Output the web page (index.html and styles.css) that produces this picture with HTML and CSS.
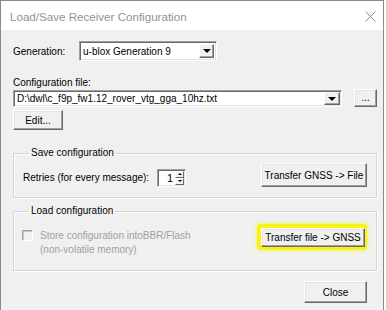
FILE: index.html
```html
<!DOCTYPE html>
<html lang="en">

<head>
    <meta charset="UTF-8">
    <title>Load/Save Receiver Configuration</title>
    <link rel="stylesheet" href="styles.css">
</head>

<body>
    <div class="window">
        <div class="titlebar">
            <span class="title">Load/Save Receiver Configuration</span>
            <svg class="close-x" width="11" height="11" viewBox="0 0 11 11">
                <path d="M0.5 0.5 L10.5 10.5 M10.5 0.5 L0.5 10.5" stroke="#8c8c8c" stroke-width="1" fill="none"/>
            </svg>
        </div>

        <div class="content">
            <div class="gen-row">
                <label class="gen-label">Generation:</label>
                <div class="combo gen-combo">
                    <span class="combo-text">u-blox Generation 9</span>
                    <span class="combo-btn"><span class="arrow-down"></span></span>
                </div>
            </div>

            <div class="file-label">Configuration file:</div>
            <div class="file-row">
                <div class="combo file-combo">
                    <span class="combo-text">D:\dwl\c_f9p_fw1.12_rover_vtg_gga_10hz.txt</span>
                    <span class="combo-btn"><span class="arrow-down"></span></span>
                </div>
                <button class="btn btn-dots">...</button>
            </div>
            <button class="btn btn-edit">Edit...</button>

            <fieldset class="group group-save">
                <legend>Save configuration</legend>
                <div class="group-row">
                    <div class="retries">
                        <span class="retries-label">Retries (for every message):</span>
                        <div class="spinner">
                            <span class="spin-value">1</span>
                            <span class="spin-btns">
                                <span class="spin-btn"><span class="arrow-up"></span></span>
                                <span class="spin-btn"><span class="arrow-small-down"></span></span>
                            </span>
                        </div>
                    </div>
                    <button class="btn btn-transfer">Transfer GNSS -&gt; File</button>
                </div>
            </fieldset>

            <fieldset class="group group-load">
                <legend>Load configuration</legend>
                <div class="group-row load-row">
                    <div class="store">
                        <span class="checkbox"></span>
                        <span class="store-text">Store configuration intoBBR/Flash<br>(non-volatile memory)</span>
                    </div>
                    <div class="highlight">
                        <button class="btn btn-load">Transfer file -&gt; GNSS</button>
                    </div>
                </div>
            </fieldset>

            <div class="footer">
                <button class="btn btn-close">Close</button>
            </div>
        </div>
    </div>
</body>

</html>
```

FILE: styles.css
```css
body {
    margin: 0;
    background-color: #ffffff;
    font-family: "Liberation Sans", Arial, sans-serif;
    font-size: 10px;
    color: #000;
}

.window {
    width: 382px;
    border: 1px solid #8a8a8a;
    background-color: #f0f0f0;
}

.titlebar {
    height: 29px;
    display: flex;
    align-items: center;
    justify-content: space-between;
    padding: 0 7px 0 9px;
    background-color: #ffffff;
}

.title {
    font-size: 11.6px;
    color: #929292;
    margin-top: 2px;
}

.close-x {
    margin-top: 1px;
}

.content {
    padding: 11px 0 10px 12px;
    width: 364px;
}

/* sunken / raised looks */
.combo,
.spinner {
    border: 1px solid;
    border-color: #a0a0a0 #ffffff #ffffff #a0a0a0;
    box-shadow: inset 1px 1px #696969, inset -1px -1px #e3e3e3;
    background-color: #ffffff;
    box-sizing: border-box;
    display: flex;
    align-items: center;
}

.btn {
    font-family: inherit;
    font-size: 10px;
    color: #000;
    background-color: #f0f0f0;
    border: 1px solid;
    border-color: #ffffff #696969 #696969 #ffffff;
    box-shadow: inset -1px -1px #a0a0a0, inset 1px 1px #e3e3e3;
    box-sizing: border-box;
    padding: 0;
    margin: 0;
}

.gen-row {
    display: flex;
    align-items: center;
}

.gen-label {
    width: 66px;
}

.gen-combo {
    width: 138px;
    height: 20px;
}

.combo-text {
    flex: 1;
    padding-left: 3px;
    white-space: nowrap;
    overflow: hidden;
}

.combo-btn {
    width: 15px;
    align-self: stretch;
    margin: 2px 2px 2px 0;
    background-color: #f0f0f0;
    border: 1px solid;
    border-color: #ffffff #696969 #696969 #ffffff;
    box-shadow: inset -1px -1px #a0a0a0;
    box-sizing: border-box;
    display: flex;
    align-items: center;
    justify-content: center;
}

.arrow-down {
    width: 0;
    height: 0;
    border-left: 4px solid transparent;
    border-right: 4px solid transparent;
    border-top: 4px solid #000;
}

.file-label {
    margin-top: 15px;
    line-height: 13px;
}

.file-row {
    display: flex;
    align-items: flex-start;
    margin-top: 0;
}

.file-combo {
    width: 331px;
    height: 17px;
    margin-top: 1px;
}

.file-combo .combo-btn {
    width: 16px;
    margin: 1px 1px 1px 0;
}

.btn-dots {
    width: 23px;
    height: 18px;
    margin-left: 12px;
    line-height: 10px;
}

.btn-edit {
    display: block;
    width: 50px;
    height: 20px;
    margin-top: 3px;
}

.group {
    margin: 0;
    border: 1px solid #d5d5d5;
    box-shadow: inset 1px 1px #ffffff, 1px 1px #ffffff;
    box-sizing: border-box;
    width: 364px;
    padding: 4px 9px 10px 9px;
}

.group legend {
    padding: 0 2px;
    margin-left: 6px;
    line-height: 12px;
}

.group-save {
    margin-top: 17px;
}

.group-load {
    margin-top: 7px;
    padding-top: 7px;
    padding-bottom: 13px;
}

.group-row {
    display: flex;
    justify-content: space-between;
    align-items: center;
}

.retries {
    display: flex;
    align-items: center;
    margin-top: 5px;
}

.retries-label {
    width: 134px;
}

.spinner {
    width: 29px;
    height: 18px;
    padding: 1px 1px 1px 0;
}

.spin-value {
    flex: 1;
    text-align: right;
    padding-right: 2px;
    font-size: 11px;
}

.spin-btns {
    display: flex;
    flex-direction: column;
    width: 9px;
    align-self: stretch;
}

.spin-btn {
    flex: 1;
    background-color: #f0f0f0;
    border: 1px solid;
    border-color: #ffffff #696969 #696969 #ffffff;
    box-sizing: border-box;
    display: flex;
    align-items: center;
    justify-content: center;
}

.arrow-up {
    width: 0;
    height: 0;
    border-left: 2px solid transparent;
    border-right: 2px solid transparent;
    border-bottom: 2px solid #000;
}

.arrow-small-down {
    width: 0;
    height: 0;
    border-left: 2px solid transparent;
    border-right: 2px solid transparent;
    border-top: 2px solid #000;
}

.btn-transfer {
    width: 106px;
    height: 24px;
}

.load-row {
    align-items: flex-start;
}

.store {
    display: flex;
    align-items: flex-start;
    color: #a0a0a0;
}

.checkbox {
    width: 11px;
    height: 11px;
    margin: 6px 0 0 -1px;
    border: 1px solid;
    border-color: #a0a0a0 #ffffff #ffffff #a0a0a0;
    box-shadow: inset 1px 1px #c8c8c8;
    box-sizing: border-box;
    background-color: #f0f0f0;
}

.store-text {
    margin: 5px 0 0 7px;
    line-height: 14px;
}

.highlight {
    background-color: #f7f21a;
    border-radius: 4px;
    box-shadow: 0 0 3px 1px #f7f46a;
    padding: 4px 2px 3px 4px;
}

.btn-load {
    display: block;
    width: 104px;
    height: 19px;
}

.footer {
    display: flex;
    justify-content: flex-end;
    padding-right: 10px;
    margin-top: 10px;
}

.btn-close {
    width: 63px;
    height: 22px;
}
```
